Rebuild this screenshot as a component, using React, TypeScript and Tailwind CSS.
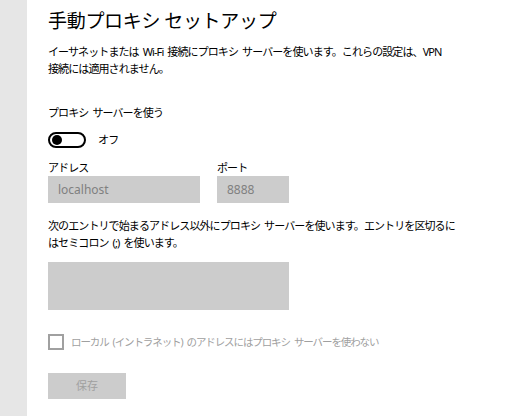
const font = { fontFamily: '"Noto Sans", "Noto Sans CJK JP", sans-serif' };

// narrow word gap like the Yu Gothic UI spacing
const Sp = () => <span className="inline-block w-[4px]" />;

const Toggle = () => (
  <div className="flex items-center gap-[12px]">
    <div className="w-[38px] h-[16px] rounded-full border-2 border-black flex items-center px-[2px]">
      <div className="w-[10px] h-[10px] rounded-full bg-black" />
    </div>
    <span className="text-[11px] leading-[16px] tracking-[-0.8px] text-black">オフ</span>
  </div>
);

const txt = "text-[11px] leading-[17px] tracking-[-0.9px] whitespace-nowrap";

export default function App() {
  return (
    <div className="flex w-[522px] h-[416px] bg-white" style={font}>
      <div className="w-[27px] shrink-0 bg-[#e6e6e6]" />
      <div className="flex flex-col pl-[21px] pt-[8px] text-black">
        <h1 className="text-[19px] leading-[26px] font-normal tracking-[-0.3px]">
          手動プロキシ<Sp />セットアップ
        </h1>

        <p className={`mt-[9px] ${txt}`}>
          イーサネットまたは<Sp />Wi&#8209;Fi<Sp />接続にプロキシ<Sp />サーバーを使います。これらの設定は、VPN
          <br />
          接続には適用されません。
        </p>

        <div className={`mt-[27px] ${txt}`}>
          プロキシ<Sp />サーバーを使う
        </div>
        <div className="mt-[11px]">
          <Toggle />
        </div>

        <div className="mt-[12px] flex gap-[17px]">
          <div className="flex flex-col">
            <label className="text-[11px] leading-[16px] tracking-[-0.9px]">アドレス</label>
            <div className="w-[152px] h-[27px] bg-[#cccccc] flex items-center px-[10px] text-[12px] text-[#808080]">
              localhost
            </div>
          </div>
          <div className="flex flex-col">
            <label className="text-[11px] leading-[16px] tracking-[-0.9px]">ポート</label>
            <div className="w-[72px] h-[27px] bg-[#cccccc] flex items-center px-[10px] text-[12px] text-[#808080]">
              8888
            </div>
          </div>
        </div>

        <p className={`mt-[14px] leading-[16px] ${txt}`}>
          次のエントリで始まるアドレス以外にプロキシ<Sp />サーバーを使います。エントリを区切るに
          <br />
          はセミコロン<Sp />(;)<Sp />を使います。
        </p>

        <div className="mt-[11px] w-[241px] h-[48px] bg-[#cccccc]" />

        <div className="mt-[24px] flex items-center gap-[7px]">
          <div className="w-[16px] h-[16px] border-2 border-[#a0a0a0]" />
          <span className="text-[10.5px] leading-[16px] tracking-[-1.1px] text-[#a0a0a0] whitespace-nowrap">
            ローカル<Sp />(イントラネット)<Sp />のアドレスにはプロキシ<Sp />サーバーを使わない
          </span>
        </div>

        <button
          type="button"
          className="mt-[23px] w-[78px] h-[26px] bg-[#cccccc] text-[11px] text-[#a0a0a0]"
        >
          保存
        </button>
      </div>
    </div>
  );
}
